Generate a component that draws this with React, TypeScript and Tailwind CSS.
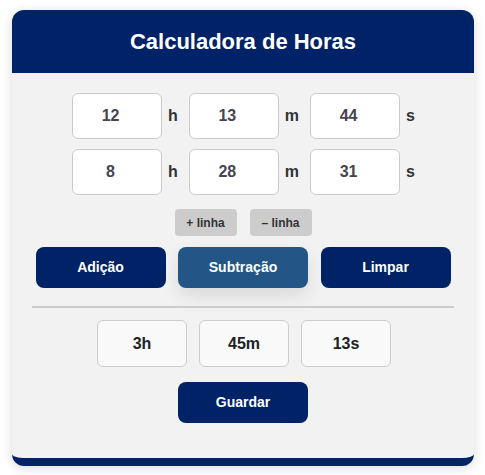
import { useState } from 'react';

const navy = 'bg-[#002266]';

function TimeField({ value, unit }: { value: string; unit: string }) {
  return (
    <div className="flex items-center">
      <input
        type="text"
        readOnly
        value={value}
        className="w-[90px] h-[46px] rounded-[6px] border border-[#cccccc] bg-white pr-[13px] text-center text-[16px] font-bold text-[#454552] outline-none"
      />
      <span className="ml-[6px] text-[16px] font-bold text-[#333333]">{unit}</span>
    </div>
  );
}

export default function App() {
  const [rows] = useState([
    ['12', '13', '44'],
    ['8', '28', '31'],
  ]);

  return (
    <div className="min-h-[475px] bg-white pt-[10px] font-['Liberation_Sans',Arial,sans-serif]">
      <div className="ml-[12px] w-[462px] h-[456px] overflow-hidden rounded-[12px] border-b-[8px] border-[#002266] bg-[#f2f2f2] shadow-[0_2px_12px_rgba(0,0,0,0.15)] flex flex-col">
        <div className={`${navy} h-[63px] shrink-0 flex items-center justify-center`}>
          <h1 className="text-[22px] font-bold text-white">Calculadora de Horas</h1>
        </div>

        <div className="flex flex-col items-center pt-[20px]">
          <div className="flex flex-col gap-[10px] pl-[1px]">
            {rows.map((r, i) => (
              <div key={i} className="flex items-center justify-center gap-[11px]">
                <TimeField value={r[0]} unit="h" />
                <TimeField value={r[1]} unit="m" />
                <TimeField value={r[2]} unit="s" />
              </div>
            ))}
          </div>

          <div className="mt-[14px] flex gap-[13px]">
            <button className="w-[62px] h-[27px] rounded-[4px] bg-[#cccccc] text-[12px] font-bold text-[#333333]">+ linha</button>
            <button className="w-[62px] h-[27px] rounded-[4px] bg-[#cccccc] text-[12px] font-bold text-[#333333]">– linha</button>
          </div>

          <div className="mt-[11px] flex gap-[12.5px]">
            <button className={`${navy} w-[130px] h-[41px] rounded-[8px] text-[14px] font-bold text-white`}>Adição</button>
            <button className="w-[130px] h-[41px] rounded-[8px] bg-[#235587] text-[14px] font-bold text-white shadow-[0_8px_18px_rgba(0,0,0,0.1)]">
              Subtração
            </button>
            <button className={`${navy} w-[130px] h-[41px] rounded-[8px] text-[14px] font-bold text-white`}>Limpar</button>
          </div>
        </div>

        <div className="mx-[20px] mt-[18px] h-[2px] bg-[#cccccc]" />

        <div className="flex flex-col items-center">
          <div className="mt-[12px] flex gap-[12px] pl-[2px]">
            {['3h', '45m', '13s'].map((t) => (
              <div
                key={t}
                className="w-[90px] h-[47px] rounded-[6px] border border-[#cccccc] bg-[#f9f9f9] flex items-center justify-center text-[16px] font-bold text-[#222222]"
              >
                {t}
              </div>
            ))}
          </div>

          <button className={`${navy} mt-[15px] w-[130px] h-[41px] rounded-[8px] text-[14px] font-bold text-white`}>Guardar</button>
        </div>
      </div>
    </div>
  );
}
